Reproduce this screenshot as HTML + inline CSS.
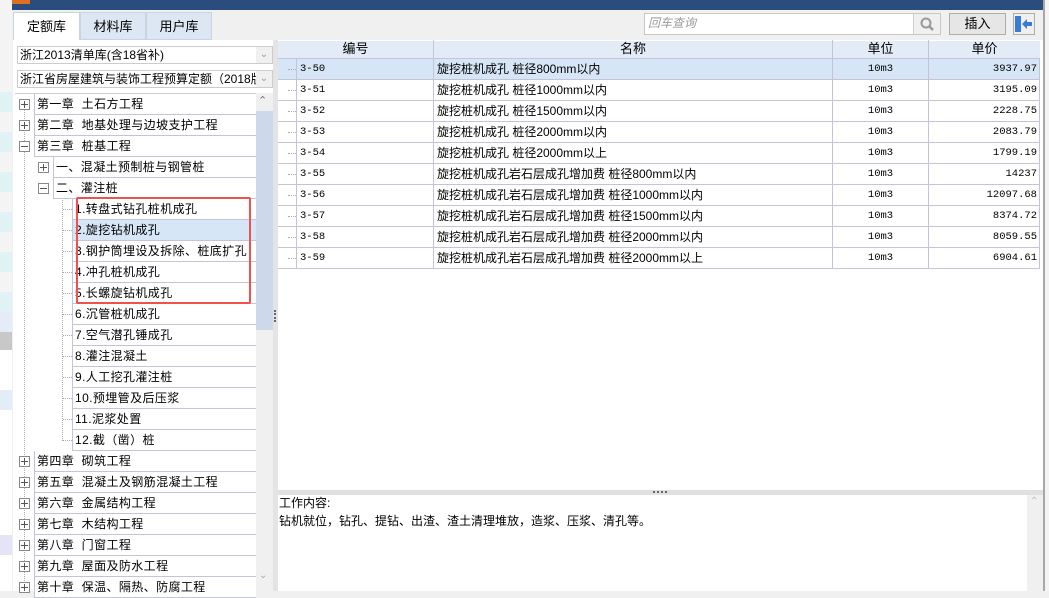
<!DOCTYPE html>
<html><head><meta charset="utf-8"><style>
*{margin:0;padding:0;box-sizing:border-box}
body{width:1049px;height:591px;overflow:hidden;background:#f0f0f0;font-family:"Liberation Sans","Noto Sans CJK SC",sans-serif;font-size:12px;color:#000;position:relative}
.a{position:absolute}
.t{white-space:nowrap;line-height:20px}
.row{position:absolute;height:21px;border-bottom:1px solid #c4c4d8;background:#fff;white-space:nowrap;line-height:20px;padding-left:2px;border-left:1px solid #c4c4d8;letter-spacing:0.4px}
.pm{position:absolute;width:11px;height:11px;border:1px solid #888;background:#fff}
.pm:before{content:"";position:absolute;left:1px;top:4px;width:7px;height:1px;background:#555}
.pm.p:after{content:"";position:absolute;left:4px;top:1px;width:1px;height:7px;background:#555}
.g{position:absolute;height:21px;border-bottom:1px solid #c4c4d8;background:#fff;line-height:20px;white-space:nowrap}
.g div{position:absolute;top:0;height:21px;border-left:1px solid #c4c4d8;padding:0 3px}
.m{font-family:"Liberation Mono",monospace;font-size:10.5px}
</style></head><body>
<div class="a" style="left:0;top:0;width:12px;height:591px;background:#e8e8e8"></div>
<div class="a" style="left:0;top:0;width:12px;height:332px;background:#f4f4f4"></div>
<div class="a" style="left:0;top:92px;width:12px;height:20px;background:#dff3f5"></div>
<div class="a" style="left:0;top:132px;width:12px;height:20px;background:#dff3f5"></div>
<div class="a" style="left:0;top:172px;width:12px;height:20px;background:#dff3f5"></div>
<div class="a" style="left:0;top:212px;width:12px;height:20px;background:#dff3f5"></div>
<div class="a" style="left:0;top:252px;width:12px;height:20px;background:#dff3f5"></div>
<div class="a" style="left:0;top:292px;width:12px;height:20px;background:#dff3f5"></div>
<div class="a" style="left:0;top:312px;width:12px;height:20px;background:#e4ecf7"></div>
<div class="a" style="left:0;top:332px;width:12px;height:18px;background:#c8c8c8"></div>
<div class="a" style="left:0;top:350px;width:12px;height:241px;background:#fff"></div>
<div class="a" style="left:0;top:390px;width:12px;height:20px;background:#e4ecf7"></div>
<div class="a" style="left:0;top:535px;width:12px;height:20px;background:#e4e4f7"></div>
<div class="a" style="left:1043px;top:0;width:6px;height:591px;background:#f4f4f4;border-left:2px solid #a8a8a8"></div>
<div class="a" style="left:12px;top:0;width:1031px;height:10px;background:#2b4d7e"></div>
<div class="a" style="left:12px;top:0;width:18px;height:4px;background:#e07020"></div>
<div class="a" style="left:12px;top:10px;width:1031px;height:31px;background:#f0f0f0"></div>
<div class="a t" style="left:13px;top:12px;width:67px;height:29px;background:#fff;border:1px solid #c8d4e4;border-bottom:none;text-align:center;line-height:28px;font-size:13px">定额库</div>
<div class="a t" style="left:80px;top:12px;width:66px;height:28px;background:#dde7f3;border:1px solid #c8d4e4;text-align:center;line-height:28px;font-size:13px">材料库</div>
<div class="a t" style="left:146px;top:12px;width:66px;height:28px;background:#dde7f3;border:1px solid #c8d4e4;text-align:center;line-height:28px;font-size:13px">用户库</div>
<div class="a" style="left:13px;top:40px;width:264px;height:551px;background:#fff"></div>
<div class="a t" style="left:17px;top:46px;width:256px;height:18px;border:1px solid #ccc;background:#fff;line-height:16px;padding-left:2px;font-size:12px">浙江2013清单库(含18省补)</div>
<div class="a" style="left:256px;top:47px;width:16px;height:16px;background:#f0f0f0;color:#999;font-size:10px;text-align:center;line-height:16px">&#8964;</div>
<div class="a t" style="left:17px;top:70px;width:256px;height:18px;border:1px solid #ccc;background:#fff;line-height:16px;padding-left:2px;font-size:12px;overflow:hidden">浙江省房屋建筑与装饰工程预算定额（2018版</div>
<div class="a" style="left:256px;top:71px;width:16px;height:16px;background:#f0f0f0;color:#999;font-size:10px;text-align:center;line-height:16px">&#8964;</div>
<div class="a" style="left:15px;top:93px;width:241px;height:498px;background:#fff;border-top:1px solid #ccc"></div>
<div class="a" style="left:256px;top:93px;width:17px;height:498px;background:#f0f0f0"></div>
<div class="a" style="left:256px;top:111px;width:17px;height:219px;background:#cdd9ea"></div>
<div class="a" style="left:258px;top:94px;font-size:11px;color:#777">&#8963;</div>
<div class="a" style="left:259px;top:570px;font-size:10px;color:#aaa">&#8964;</div>
<div class="a" style="left:273px;top:40px;width:5px;height:551px;background:#e4e4e4"></div>
<div class="a" style="left:274px;top:310px;width:2px;height:12px;border-left:2px dotted #666"></div>
<div class="a" style="left:24px;top:110px;height:481px;border-left:1px dotted #aaa"></div>
<div class="a" style="left:62px;top:195px;height:246px;border-left:1px dotted #aaa"></div>
<div id="tree"></div>
<div class="a" style="left:278px;top:40px;width:765px;height:452px;background:#fff"></div>
<div class="a" style="left:278px;top:41px;width:762px;height:18px;background:#e3ebf6;border-bottom:1px solid #c4c4d8"></div>
<div class="a t" style="left:278px;top:40px;width:155px;text-align:center;line-height:18px;font-size:13px">编号</div>
<div class="a t" style="left:433px;top:40px;width:399px;text-align:center;line-height:18px;font-size:13px;border-left:1px solid #c4c4d8">名称</div>
<div class="a t" style="left:832px;top:40px;width:96px;text-align:center;line-height:18px;font-size:13px;border-left:1px solid #c4c4d8">单位</div>
<div class="a t" style="left:928px;top:40px;width:112px;text-align:center;line-height:18px;font-size:13px;border-left:1px solid #c4c4d8">单价</div>
<div class="a" style="left:287px;top:62px;height:206px;border-left:1px dotted #aaa"></div>
<div id="grid"></div>
<div class="a" style="left:278px;top:490px;width:765px;height:5px;background:#e0e0e0"></div>
<div class="a" style="left:653px;top:491px;width:14px;height:2px;border-top:2px dotted #666"></div>
<div class="a" style="left:278px;top:495px;width:750px;height:96px;background:#fff"></div>
<div class="a" style="left:1027px;top:495px;width:14px;height:96px;background:#f0f0f0"></div>
<div class="a" style="left:1030px;top:496px;font-size:10px;color:#bbb">&#8963;</div>
<div class="a t" style="left:279px;top:494px;line-height:18px">工作内容:</div>
<div class="a t" style="left:279px;top:512px;line-height:18px">钻机就位，钻孔、提钻、出渣、渣土清理堆放，造浆、压浆、清孔等。</div>
<div class="a" style="left:644px;top:13px;width:297px;height:22px;border:1px solid #c8c8c8;background:#fff"></div>
<div class="a t" style="left:648px;top:14px;color:#999;font-style:italic;line-height:18px">回车查询</div>
<div class="a" style="left:913px;top:14px;width:27px;height:20px;background:#f0f0f0;border-left:1px solid #ccc"></div>
<svg class="a" style="left:919px;top:16px" width="16" height="16"><circle cx="7" cy="7" r="4.5" fill="none" stroke="#999" stroke-width="2"/><line x1="10" y1="10" x2="14" y2="14" stroke="#999" stroke-width="2.5"/></svg>
<div class="a t" style="left:949px;top:13px;width:57px;height:22px;border:1px solid #adadad;background:#e6e6e6;text-align:center;line-height:20px;font-size:13px">插入</div>
<div class="a" style="left:1013px;top:13px;width:22px;height:22px;border:1px solid #adadad;background:#f0f0f0"></div>
<div class="a" style="left:1015px;top:16px;width:6px;height:16px;background:#3a7bd5"></div>
<svg class="a" style="left:1021px;top:18px" width="12" height="12"><path d="M1 6 L6 1 L6 4 L11 4 L11 8 L6 8 L6 11 Z" fill="#3a7bd5"/></svg>
<div class="a" style="left:76px;top:197px;width:175px;height:107px;border:2px solid #f05050;border-radius:2px"></div>
<script>
var T=[[0,94,'第一章  土石方工程',1],[0,115,'第二章  地基处理与边坡支护工程',1],[0,136,'第三章  桩基工程',2],
[1,157,'一、混凝土预制桩与钢管桩',1],[1,178,'二、灌注桩',2],
[2,199,'1.转盘式钻孔桩机成孔'],[2,220,'2.旋挖钻机成孔',0,1],[2,241,'3.钢护筒埋设及拆除、桩底扩孔'],[2,262,'4.冲孔桩机成孔'],[2,283,'5.长螺旋钻机成孔'],
[2,304,'6.沉管桩机成孔'],[2,325,'7.空气潜孔锤成孔'],[2,346,'8.灌注混凝土'],[2,367,'9.人工挖孔灌注桩'],[2,388,'10.预埋管及后压浆'],[2,409,'11.泥浆处置'],[2,430,'12.截（凿）桩'],
[0,451,'第四章  砌筑工程',1],[0,472,'第五章  混凝土及钢筋混凝土工程',1],[0,493,'第六章  金属结构工程',1],[0,514,'第七章  木结构工程',1],[0,535,'第八章  门窗工程',1],[0,556,'第九章  屋面及防水工程',1],[0,577,'第十章  保温、隔热、防腐工程',1]];
var h='';T.forEach(function(r){var L=[34,53,72][r[0]];var px=[19,38][r[0]];
h+='<div class="row" style="left:'+L+'px;top:'+r[1]+'px;width:'+(256-L)+'px;white-space:pre;'+(r[4]?'background:#d6e6f7;':'')+'">'+r[2]+'</div>';
if(r[3])h+='<div class="pm '+(r[3]==1?'p':'')+'" style="left:'+px+'px;top:'+(r[1]+5)+'px"></div>';
else h+='<div class="a" style="left:63px;top:'+(r[1]+10)+'px;width:9px;border-top:1px dotted #aaa"></div>';});
document.getElementById('tree').innerHTML=h;
var G=[['3-50','旋挖桩机成孔 桩径800mm以内','3937.97'],['3-51','旋挖桩机成孔 桩径1000mm以内','3195.09'],['3-52','旋挖桩机成孔 桩径1500mm以内','2228.75'],['3-53','旋挖桩机成孔 桩径2000mm以内','2083.79'],['3-54','旋挖桩机成孔 桩径2000mm以上','1799.19'],['3-55','旋挖桩机成孔岩石层成孔增加费 桩径800mm以内','14237'],['3-56','旋挖桩机成孔岩石层成孔增加费 桩径1000mm以内','12097.68'],['3-57','旋挖桩机成孔岩石层成孔增加费 桩径1500mm以内','8374.72'],['3-58','旋挖桩机成孔岩石层成孔增加费 桩径2000mm以内','8059.55'],['3-59','旋挖桩机成孔岩石层成孔增加费 桩径2000mm以上','6904.61']];
var g='';G.forEach(function(r,i){var y=59+i*21;
g+='<div class="g" style="left:278px;top:'+y+'px;width:762px;'+(i==0?'background:#d6e6f7;':'')+'border-right:1px solid #c4c4d8">'+
'<div class="m" style="left:18px;width:137px">'+r[0]+'</div><div style="left:155px;width:399px;font-size:12px">'+r[1]+'</div><div class="m" style="left:554px;width:96px;text-align:center">10m3</div><div class="m" style="left:650px;width:112px;text-align:right">'+r[2]+'</div></div>';
g+='<div class="a" style="left:288px;top:'+(y+10)+'px;width:8px;border-top:1px dotted #aaa"></div>';});
document.getElementById('grid').innerHTML=g;
</script>
</body></html>
